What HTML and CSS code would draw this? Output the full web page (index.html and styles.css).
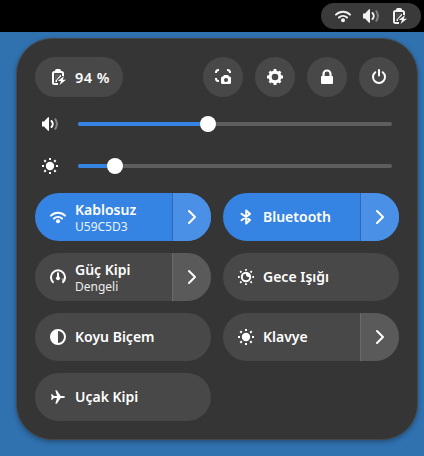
FILE: index.html
```html
<!DOCTYPE html>
<html lang="tr">
<head>
<meta charset="utf-8">
<title>Hızlı Ayarlar</title>
<link rel="stylesheet" href="styles.css">
</head>
<body>
<svg class="defs" aria-hidden="true">
  <symbol id="wifi" viewBox="0 0 16 16">
    <path d="M1 6.600a10 10 0 0 1 14 0M4 9.600a6 6 0 0 1 8 0" fill="none" stroke="currentColor" stroke-width="2" stroke-linecap="round"/>
    <circle cx="8" cy="12.200" r="2" fill="currentColor"/>
  </symbol>
  <symbol id="volume" viewBox="0 0 16 16">
    <path d="M0 5.500h2L6 1.200h1v13.600H6L2 10.500H0z" fill="currentColor"/>
    <path d="M9.500 5a4.300 4.300 0 0 1 0 6" fill="none" stroke="currentColor" stroke-width="2" stroke-linecap="round"/>
    <path d="M13 2.500q3.800 5.500 0 11" fill="none" stroke="currentColor" stroke-width="2" opacity=".4"/>
  </symbol>
  <symbol id="battery" viewBox="0 0 16 16">
    <path d="M8 15H4.500Q3 15 3 13.500V4.500Q3 3 4.500 3H11.500Q13 3 13 4.500V7" fill="none" stroke="currentColor" stroke-width="2"/>
    <path d="M5 3V1.600Q5 0 6.600 0h2.800Q11 0 11 1.600V3z" fill="currentColor"/>
    <path d="M5 5h6v1.700L6.500 11 7.500 13H5z" fill="currentColor" opacity=".12"/>
    <path d="M10.500 6H11v1.500L7 11.300V13H5.500V11.800z" fill="currentColor"/>
    <path d="M14 7 7.800 12H11l-1.500 4L16 10.700h-3.200z" fill="currentColor"/>
  </symbol>
  <symbol id="shot" viewBox="0 0 16 16">
    <path d="M1 4V3.500Q1 1 3.500 1H4M12 1h.5Q15 1 15 3.500V4M1 9v.5Q1 12 3.500 12H4" fill="none" stroke="currentColor" stroke-width="2"/>
    <path fill-rule="evenodd" d="M7.500 7.500H8L9 6h4l1 1.500h.5q1.500 0 1.500 1.500v4.500q0 1.500-1.500 1.500h-7Q6 15 6 13.500V9q0-1.500 1.500-1.500zM11 9a2 2 0 1 0 0 4 2 2 0 0 0 0-4z" fill="currentColor"/>
  </symbol>
  <symbol id="gear" viewBox="0 0 16 16">
    <circle cx="8" cy="8" r="4.900" fill="none" stroke="currentColor" stroke-width="3.200"/>
    <path d="M8 0v3M8 13v3M0 8h3M13 8h3M2.500 2.500l2 2M11.500 11.500l2 2M13.500 2.500l-2 2M4.500 11.500l-2 2" stroke="currentColor" stroke-width="2.800"/>
  </symbol>
  <symbol id="lock" viewBox="0 0 16 16">
    <path d="M4.500 8V5a3.500 3.500 0 0 1 7 0v3" fill="none" stroke="currentColor" stroke-width="2.200"/>
    <rect x="2" y="7" width="12" height="8" rx="1" fill="currentColor"/>
  </symbol>
  <symbol id="power" viewBox="0 0 16 16">
    <path d="M4.300 3.200a6 6 0 1 0 7.400 0" fill="none" stroke="currentColor" stroke-width="2" stroke-linecap="round"/>
    <path d="M8 1v5.500" stroke="currentColor" stroke-width="2" stroke-linecap="round"/>
  </symbol>
  <symbol id="sun" viewBox="0 0 16 16">
    <circle cx="8" cy="8" r="4.200" fill="currentColor"/>
    <path d="M8 0v2M8 14v2M0 8h2M14 8h2M2.300 2.300l1.500 1.500M12.200 12.200l1.500 1.500M13.700 2.300l-1.500 1.500M3.800 12.200l-1.500 1.500" stroke="currentColor" stroke-width="2"/>
  </symbol>
  <symbol id="night" viewBox="0 0 16 16">
    <path fill-rule="evenodd" d="M8 2.800a5.200 5.200 0 1 0 0 10.400A5.200 5.200 0 0 0 8 2.800zM8 4.800Q7.700 8.200 11.200 8a3.200 3.200 0 1 1-3.200-3.200z" fill="currentColor"/>
    <path d="M8.600 4.600Q8.200 7.600 11.400 7.500A3.300 3.300 0 0 0 8.600 4.600z" fill="currentColor"/>
    <path d="M8 0v1.700M8 14.300V16M0 8h1.700M14.300 8H16M2.200 2.200l1.300 1.300M12.500 12.500l1.300 1.300M13.800 2.200l-1.300 1.300M3.500 12.500l-1.300 1.300" stroke="currentColor" stroke-width="1.800"/>
  </symbol>
  <symbol id="bluetooth" viewBox="0 0 16 16">
    <path d="M3.500 4.800 12 11 8.200 14.600V1.400L12 5 3.500 11.200" fill="none" stroke="currentColor" stroke-width="2" stroke-linejoin="round" stroke-linecap="round"/>
  </symbol>
  <symbol id="gauge" viewBox="0 0 16 16">
    <path d="M3.600 13.800A7 7 0 1 1 12.400 13.800" fill="none" stroke="currentColor" stroke-width="2"/>
    <path d="M11.500 10.800a4 4 0 0 0 .5-1.800l2.500.5-1.200 3.500z" fill="currentColor" opacity=".45"/>
    <path d="M8 3.500V9" stroke="currentColor" stroke-width="2"/>
    <circle cx="8" cy="9.200" r="2" fill="currentColor"/>
  </symbol>
  <symbol id="contrast" viewBox="0 0 16 16">
    <circle cx="8" cy="8" r="7" fill="none" stroke="currentColor" stroke-width="2"/>
    <path d="M8 1a7 7 0 0 0 0 14z" fill="currentColor"/>
  </symbol>
  <symbol id="plane" viewBox="0 0 16 16">
    <path d="M1 5.200h1.200L4 7.100h3L5.300 1.200h1.500L10.700 7H13q2 .2 2 1t-2 1h-2.300l-3.900 5.800H5.300L7 8.900H4l-1.800 1.900H1L1.700 8z" fill="currentColor"/>
  </symbol>
  <symbol id="chevron" viewBox="0 0 16 16">
    <path d="m5 2 6 6-6 6" fill="none" stroke="currentColor" stroke-width="2" stroke-linecap="round" stroke-linejoin="round"/>
  </symbol>
</svg>

<header class="topbar">
  <div class="status">
    <svg class="icon"><use href="#wifi"/></svg>
    <svg class="icon"><use href="#volume"/></svg>
    <svg class="icon"><use href="#battery"/></svg>
  </div>
</header>

<main class="panel">
  <div class="system">
    <button class="pill battery"><svg class="icon"><use href="#battery"/></svg><span>94 %</span></button>
    <button class="pill round"><svg class="icon"><use href="#shot"/></svg></button>
    <button class="pill round"><svg class="icon"><use href="#gear"/></svg></button>
    <button class="pill round"><svg class="icon"><use href="#lock"/></svg></button>
    <button class="pill round"><svg class="icon"><use href="#power"/></svg></button>
  </div>

  <div class="sliders">
    <div class="slider">
      <svg class="icon"><use href="#volume"/></svg>
      <div class="track"><div class="fill" style="width:41.4%"></div><div class="knob"></div></div>
    </div>
    <div class="slider">
      <svg class="icon"><use href="#sun"/></svg>
      <div class="track"><div class="fill" style="width:11.8%"></div><div class="knob"></div></div>
    </div>
  </div>

  <div class="tiles">
    <div class="tile on">
      <div class="main"><svg class="icon"><use href="#wifi"/></svg><div class="label"><div class="title">Kablosuz</div><div class="sub">U59C5D3</div></div></div>
      <div class="more"><svg class="icon"><use href="#chevron"/></svg></div>
    </div>
    <div class="tile on">
      <div class="main"><svg class="icon"><use href="#bluetooth"/></svg><div class="title">Bluetooth</div></div>
      <div class="more"><svg class="icon"><use href="#chevron"/></svg></div>
    </div>
    <div class="tile">
      <div class="main"><svg class="icon"><use href="#gauge"/></svg><div class="label"><div class="title">Güç Kipi</div><div class="sub">Dengeli</div></div></div>
      <div class="more"><svg class="icon"><use href="#chevron"/></svg></div>
    </div>
    <div class="tile">
      <div class="main"><svg class="icon"><use href="#night"/></svg><div class="title">Gece Işığı</div></div>
    </div>
    <div class="tile">
      <div class="main"><svg class="icon"><use href="#contrast"/></svg><div class="title">Koyu Biçem</div></div>
    </div>
    <div class="tile">
      <div class="main"><svg class="icon"><use href="#sun"/></svg><div class="title">Klavye</div></div>
      <div class="more"><svg class="icon"><use href="#chevron"/></svg></div>
    </div>
    <div class="tile">
      <div class="main"><svg class="icon"><use href="#plane"/></svg><div class="title">Uçak Kipi</div></div>
    </div>
  </div>
</main>
</body>
</html>
```
FILE: styles.css
```css
* { box-sizing: border-box; }
body {
  margin: 0;
  height: 456px;
  overflow: hidden;
  background: #3071af;
  color: #fff;
  font-family: "Noto Sans", sans-serif;
  font-size: 14px;
}
.defs { display: none; }
.icon { display: block; width: 16px; height: 16px; flex: none; }
.topbar {
  display: flex;
  justify-content: flex-end;
  height: 32px;
  padding: 3px 3px 3px 0;
  background: #000;
}
.status {
  display: flex;
  align-items: center;
  gap: 12px;
  width: 100px;
  padding-left: 14px;
  border-radius: 13px;
  background: #3a3a3a;
  color: #f2f2f2;
}
.panel {
  width: 402px;
  height: 402px;
  margin: 6px 0 0 16px;
  padding: 18px;
  border: 1px solid #474747;
  border-radius: 36px;
  background: #353535;
  box-shadow: 0 2px 5px rgba(0, 0, 0, .3);
}
.system { display: flex; gap: 12px; }
.pill {
  display: flex;
  align-items: center;
  justify-content: center;
  height: 40px;
  padding: 0;
  border: 0;
  border-radius: 20px;
  background: #484848;
  color: #fff;
  font: 600 14.5px/20px "Noto Sans", sans-serif;
}
.round { width: 40px; }
.battery {
  justify-content: flex-start;
  gap: 9px;
  width: 88px;
  padding-left: 15px;
  margin-right: auto;
  letter-spacing: .5px;
}
.sliders {
  display: flex;
  flex-direction: column;
  gap: 26px;
  padding: 19px 7px 0;
}
.slider { display: flex; align-items: center; gap: 20px; height: 16px; }
.track {
  display: flex;
  align-items: center;
  flex: 1;
  height: 4px;
  border-radius: 2px;
  background: #5e5e5e;
}
.fill { height: 4px; border-radius: 2px; background: #3584e4; }
.knob {
  flex: none;
  width: 16px;
  height: 16px;
  margin-left: -8px;
  border-radius: 50%;
  background: #fff;
}
.tiles {
  display: grid;
  grid-template-columns: 176px 176px;
  grid-auto-rows: 48px;
  gap: 12px;
  margin-top: 19px;
}
.tile {
  display: flex;
  overflow: hidden;
  border-radius: 24px;
  background: #484848;
}
.main {
  display: flex;
  align-items: center;
  flex: 1;
  gap: 9px;
  padding-left: 15px;
}
.title { font-weight: 600; line-height: 18px; white-space: nowrap; }
.sub { font-size: 12px; line-height: 15px; opacity: .9; }
.more {
  display: flex;
  align-items: center;
  justify-content: center;
  width: 39px;
  border-left: 1px solid #6a6a6a;
  background: #5a5a5a;
}
.on { background: #3584e4; }
.on .more { border-color: #2a6ab6; background: #4a90e7; }
```
